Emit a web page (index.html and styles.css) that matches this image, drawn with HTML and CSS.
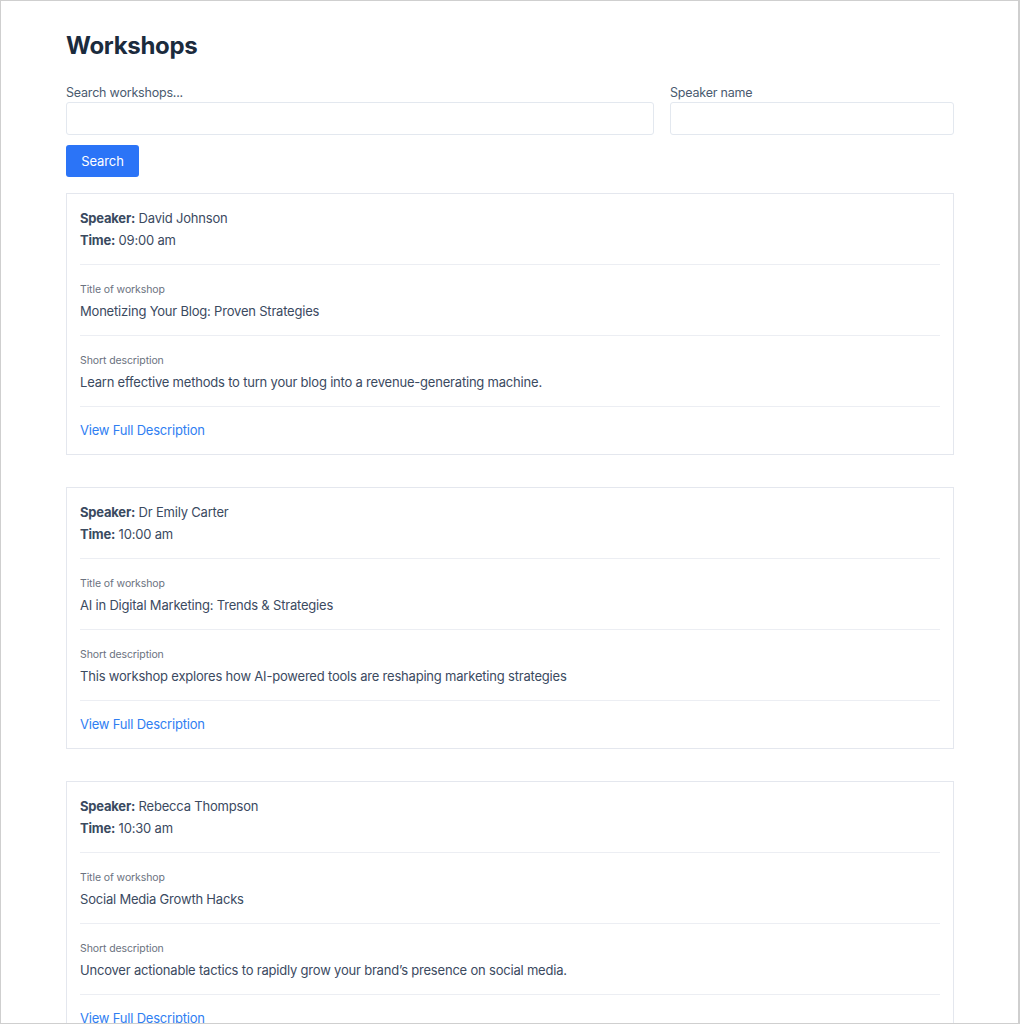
FILE: index.html
```html
<!DOCTYPE html>
<html lang="en">
<head>
<meta charset="utf-8">
<title>Workshops</title>
<link rel="stylesheet" href="styles.css">
</head>
<body>
<div class="frame">
  <main class="page">
    <h1 class="page-title">Workshops</h1>
    <form class="search-form">
      <div class="fields">
        <label class="field">
          <span class="field-label">Search workshops...</span>
          <input class="field-input" type="text">
        </label>
        <label class="field">
          <span class="field-label">Speaker name</span>
          <input class="field-input" type="text">
        </label>
      </div>
      <button class="btn" type="button">Search</button>
    </form>

    <div class="cards">
      <article class="card">
        <div class="card-head">
          <div class="meta"><strong>Speaker:</strong> David Johnson</div>
          <div class="meta"><strong>Time:</strong> 09:00 am</div>
        </div>
        <div class="card-section">
          <div class="sec-label">Title of workshop</div>
          <div class="sec-value">Monetizing Your Blog: Proven Strategies</div>
        </div>
        <div class="card-section">
          <div class="sec-label">Short description</div>
          <div class="sec-value">Learn effective methods to turn your blog into a revenue-generating machine.</div>
        </div>
        <div class="card-foot"><a class="link" href="#">View Full Description</a></div>
      </article>

      <article class="card">
        <div class="card-head">
          <div class="meta"><strong>Speaker:</strong> Dr Emily Carter</div>
          <div class="meta"><strong>Time:</strong> 10:00 am</div>
        </div>
        <div class="card-section">
          <div class="sec-label">Title of workshop</div>
          <div class="sec-value">AI in Digital Marketing: Trends &amp; Strategies</div>
        </div>
        <div class="card-section">
          <div class="sec-label">Short description</div>
          <div class="sec-value">This workshop explores how AI-powered tools are reshaping marketing strategies</div>
        </div>
        <div class="card-foot"><a class="link" href="#">View Full Description</a></div>
      </article>

      <article class="card">
        <div class="card-head">
          <div class="meta"><strong>Speaker:</strong> Rebecca Thompson</div>
          <div class="meta"><strong>Time:</strong> 10:30 am</div>
        </div>
        <div class="card-section">
          <div class="sec-label">Title of workshop</div>
          <div class="sec-value">Social Media Growth Hacks</div>
        </div>
        <div class="card-section">
          <div class="sec-label">Short description</div>
          <div class="sec-value">Uncover actionable tactics to rapidly grow your brand’s presence on social media.</div>
        </div>
        <div class="card-foot"><a class="link" href="#">View Full Description</a></div>
      </article>
    </div>
  </main>
</div>
</body>
</html>
```

FILE: styles.css
```css
* { box-sizing: border-box; }
html, body { margin: 0; padding: 0; background: #fff; }
body {
  font-family: Inter, "Liberation Sans", sans-serif;
  color: #3b4a5f;
  font-size: 13px;
  letter-spacing: -0.2px;
}
.frame {
  width: 1020px;
  height: 1024px;
  border: 1px solid #cfcfcf;
  border-right-width: 2px;
  overflow: hidden;
}
.page {
  padding: 29px 64px 0 65px;
}
.page-title {
  margin: 0;
  font-size: 24px;
  line-height: 32px;
  font-weight: 700;
  color: #1b2b3d;
  letter-spacing: -0.3px;
}
.search-form { margin-top: 22px; }
.fields {
  display: grid;
  grid-template-columns: 588px 1fr;
  gap: 16px;
}
.field { display: flex; flex-direction: column; }
.field-label {
  font-size: 12.5px;
  line-height: 18px;
  color: #4a5b70;
  margin-bottom: 0;
}
.field-input {
  height: 33px;
  border: 1px solid #e3e8ef;
  border-radius: 3px;
  background: #fff;
  font: inherit;
  padding: 0 10px;
  margin: 0;
}
.btn {
  display: block;
  margin-top: 10px;
  height: 32px;
  width: 73px;
  border: 0;
  border-radius: 3px;
  background: #2b74f7;
  color: #fff;
  font-family: inherit;
  font-size: 13px;
  letter-spacing: -0.1px;
  padding: 0;
}
.cards {
  margin-top: 16px;
  display: flex;
  flex-direction: column;
  gap: 32px;
}
.card {
  border: 1px solid #e4e7ee;
  padding: 0 13px;
}
.card-head { padding: 13px 0 13px; }
.meta { line-height: 22px; font-size: 13px; color: #3b4a5f; }
.meta strong { font-weight: 700; color: #3a4a5f; }
.card-section {
  border-top: 1px solid #eceef3;
  padding: 17px 0 13px;
}
.sec-label {
  font-size: 10.5px;
  line-height: 16px;
  color: #6b7280;
  margin-bottom: 2px;
  letter-spacing: -0.1px;
}
.sec-value { font-size: 13px; line-height: 22px; color: #3b4a5f; }
.card-foot {
  border-top: 1px solid #eceef3;
  padding: 12px 0 13px;
  line-height: 22px;
}
.link { color: #2f7ef2; text-decoration: none; font-size: 13px; }
```
